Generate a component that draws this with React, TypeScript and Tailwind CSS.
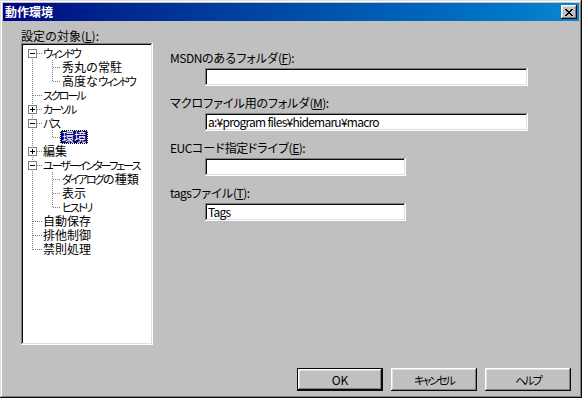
import React from "react";

type TreeNode = {
  label: string;
  level: 0 | 1;
  box?: "plus" | "minus";
  selected?: boolean;
};

const nodes: TreeNode[] = [
  { label: "ウィンドウ", level: 0, box: "minus" },
  { label: "秀丸の常駐", level: 1 },
  { label: "高度なウィンドウ", level: 1 },
  { label: "スクロール", level: 0 },
  { label: "カーソル", level: 0, box: "plus" },
  { label: "パス", level: 0, box: "minus" },
  { label: "環境", level: 1, selected: true },
  { label: "編集", level: 0, box: "plus" },
  { label: "ユーザーインターフェース", level: 0, box: "minus" },
  { label: "ダイアログの種類", level: 1 },
  { label: "表示", level: 1 },
  { label: "ヒストリ", level: 1 },
  { label: "自動保存", level: 0 },
  { label: "排他制御", level: 0 },
  { label: "禁則処理", level: 0 },
];

const ROW = 14;

const font = { fontFamily: '"Noto Sans CJK JP", "Liberation Sans", sans-serif' };

const narrowKana = "text-[11px] tracking-[-2px] [font-feature-settings:'palt']";

// katakana in the old UI font is much narrower than in Noto, squeeze those runs
function Jp({ text, kana }: { text: string; kana: string }) {
  const parts = text.split(/([\u30A0-\u30FF]+)/);
  return (
    <>
      {parts.map((p, i) =>
        i % 2 === 1 ? (
          <span key={i} className={kana}>
            {p}
          </span>
        ) : (
          p
        )
      )}
    </>
  );
}

// tree connector lines + expander boxes
function TreeLines() {
  const lines: React.ReactNode[] = [];
  const lastRoot = nodes.map((n) => n.level).lastIndexOf(0);
  const cy = (i: number) => i * ROW + 7.5;

  lines.push(
    <line key="root" x1={9.5} y1={7} x2={9.5} y2={lastRoot * ROW + 8} />
  );

  nodes.forEach((n, i) => {
    if (n.level === 0) {
      lines.push(<line key={"h" + i} x1={10} y1={cy(i)} x2={19} y2={cy(i)} />);
    } else {
      lines.push(<line key={"h" + i} x1={30} y1={cy(i)} x2={38} y2={cy(i)} />);
      const prev = nodes[i - 1];
      if (prev.level === 0) {
        let last = i;
        while (nodes[last + 1] && nodes[last + 1].level === 1) last++;
        lines.push(
          <line key={"v" + i} x1={29.5} y1={i * ROW} x2={29.5} y2={last * ROW + 8} />
        );
      }
    }
  });

  return (
    <svg
      className="absolute left-0 top-0"
      width={60}
      height={nodes.length * ROW}
      shapeRendering="crispEdges"
    >
      <g stroke="#808080" strokeWidth={1} strokeDasharray="1 1">
        {lines}
      </g>
      {nodes.map((n, i) =>
        n.box ? (
          <g key={"b" + i}>
            <rect x={5.5} y={i * ROW + 3.5} width={8} height={8} fill="#fff" stroke="#808080" />
            <line x1={7} y1={cy(i)} x2={12} y2={cy(i)} stroke="#000" />
            {n.box === "plus" && (
              <line x1={9.5} y1={i * ROW + 5} x2={9.5} y2={i * ROW + 10} stroke="#000" />
            )}
          </g>
        ) : null
      )}
    </svg>
  );
}

function CloseGlyph() {
  const rows = ["11000011", "01100110", "00111100", "00011000", "00111100", "01100110", "11000011"];
  return (
    <svg width={8} height={7} shapeRendering="crispEdges">
      {rows.map((r, y) =>
        r.split("").map((c, x) =>
          c === "1" ? <rect key={x + "-" + y} x={x} y={y} width={1} height={1} fill="#000" /> : null
        )
      )}
    </svg>
  );
}

function Field({ label, mnemonic, value, wide }: { label: string; mnemonic: string; value?: string; wide?: boolean }) {
  return (
    <div className="flex flex-col">
      <div className="h-[14px] whitespace-nowrap text-[12px] leading-[14px] tracking-[-0.5px] text-black">
        <Jp text={label} kana="tracking-[0px] [font-feature-settings:'palt']" />(<u>{mnemonic}</u>):
      </div>
      <div
        className={`mt-[3px] ml-[35px] h-[18px] bg-white pl-[3px] text-[12px] leading-[18px] tracking-[-0.75px] text-black shadow-[inset_-1px_-1px_#ffffff,inset_1px_1px_#808080,inset_-2px_-2px_#dfdfdf,inset_2px_2px_#0a0a0a] ${
          wide ? "w-[323px]" : "w-[201px]"
        }`}
      >
        {value}
      </div>
    </div>
  );
}

const btn =
  "h-[23px] w-[86px] bg-[#c0c0c0] text-[12px] text-black shadow-[inset_-1px_-1px_#0a0a0a,inset_1px_1px_#ffffff,inset_-2px_-2px_#808080,inset_2px_2px_#dfdfdf]";

export default function App() {
  return (
    <div
      style={font}
      className="flex h-[398px] w-[582px] flex-col bg-[#c0c0c0] p-[3px] shadow-[inset_-1px_-1px_#0a0a0a,inset_1px_1px_#dfdfdf,inset_-2px_-2px_#808080,inset_2px_2px_#ffffff]"
    >
      {/* Title bar */}
      <div className="flex h-[18px] items-center justify-between bg-gradient-to-r from-[#000080] to-[#1084d0] pl-[2px] pr-[2px]">
        <span className="text-[12px] font-bold leading-[18px] text-white">動作環境</span>
        <div className="flex h-[14px] w-[16px] items-center justify-center bg-[#c0c0c0] shadow-[inset_-1px_-1px_#0a0a0a,inset_1px_1px_#ffffff,inset_-2px_-2px_#808080,inset_2px_2px_#dfdfdf]">
          <CloseGlyph />
        </div>
      </div>

      {/* Body */}
      <div className="flex flex-1 flex-row">
        <div className="flex flex-col pl-[18px] pt-[8px]">
          <div className="h-[14px] text-[12px] leading-[14px] text-black">
            設定の対象(<u>L</u>):
          </div>
          <div className="h-[302px] w-[132px] bg-white p-[2px] pt-[3px] shadow-[inset_-1px_-1px_#ffffff,inset_1px_1px_#808080,inset_-2px_-2px_#dfdfdf,inset_2px_2px_#0a0a0a]">
            <div className="relative">
              <TreeLines />
              {nodes.map((n) => (
                <div
                  key={n.label}
                  className={`relative flex h-[14px] items-center ${n.level === 0 ? "pl-[18px]" : "pl-[37px]"}`}
                >
                  <span
                    className={`border px-[1px] text-[12px] leading-[12px] whitespace-nowrap ${
                      n.selected
                        ? "border-dotted border-[#ffff7f] bg-[#000080] text-white"
                        : "border-transparent text-black"
                    }`}
                  >
                    <Jp text={n.label} kana={narrowKana} />
                  </span>
                </div>
              ))}
            </div>
          </div>
        </div>

        <div className="ml-[17px] flex flex-col gap-[10px] pt-[30px]">
          <Field label="MSDNのあるフォルダ" mnemonic="F" wide />
          <Field label="マクロファイル用のフォルダ" mnemonic="M" value="a:¥program files¥hidemaru¥macro" wide />
          <Field label="EUCコード指定ドライブ" mnemonic="E" />
          <Field label="tagsファイル" mnemonic="T" value="Tags" />
        </div>
      </div>

      {/* Buttons */}
      <div className="flex justify-end gap-[8px] pb-[4px] pr-[8px]">
        <button className="h-[23px] w-[86px] bg-[#c0c0c0] text-[12px] text-black shadow-[inset_0_0_0_1px_#0a0a0a,inset_-2px_-2px_#0a0a0a,inset_2px_2px_#ffffff,inset_-3px_-3px_#808080,inset_3px_3px_#dfdfdf]">
          OK
        </button>
        <button className={btn}>
          <Jp text="キャンセル" kana={narrowKana} />
        </button>
        <button className={btn}>
          <Jp text="ヘルプ" kana={narrowKana} />
        </button>
      </div>
    </div>
  );
}
